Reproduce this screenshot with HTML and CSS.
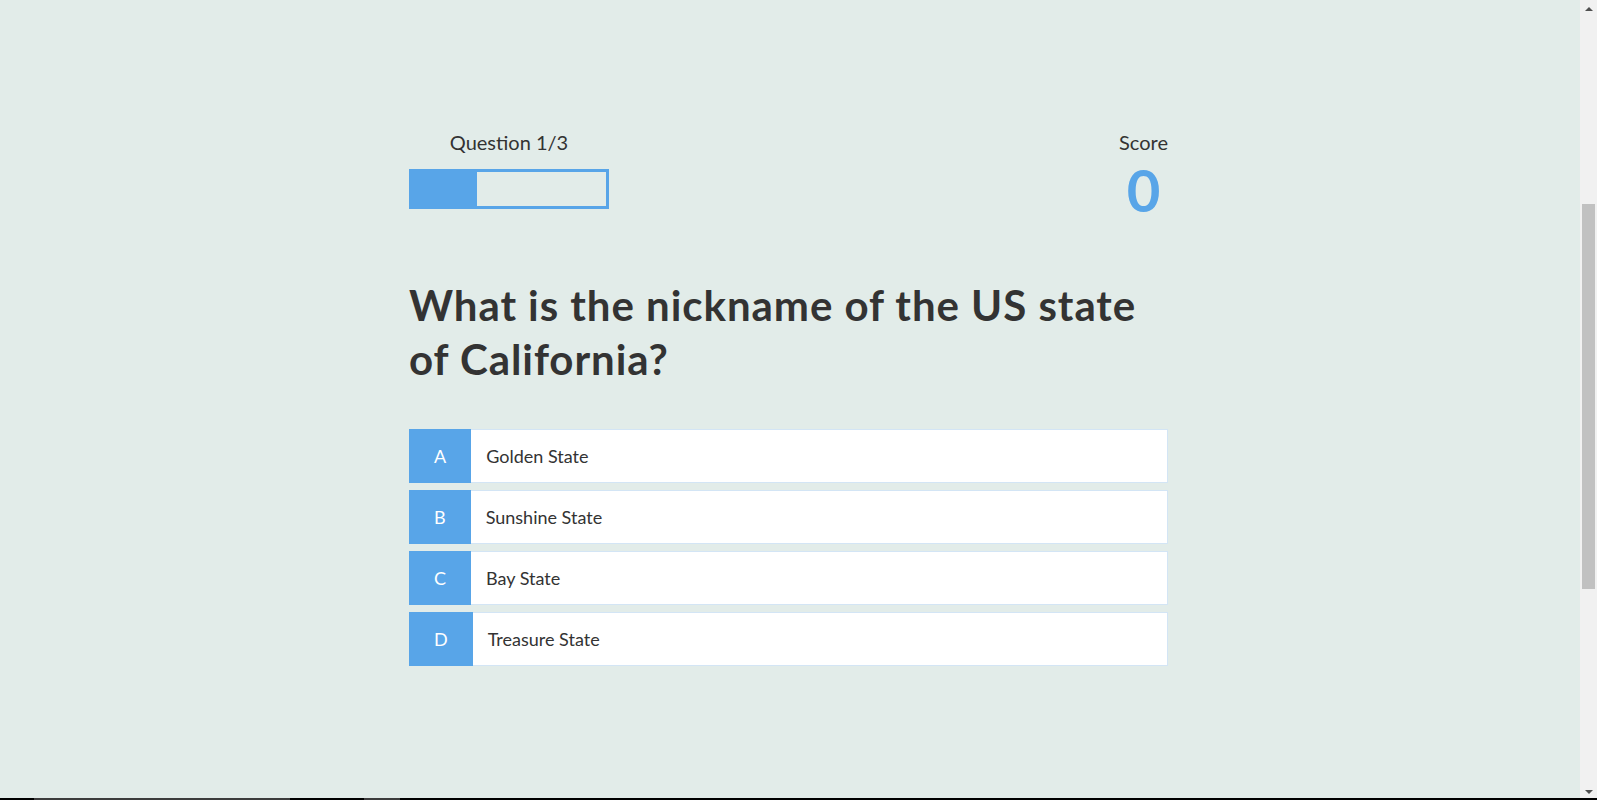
FILE: index.html
```html
<!DOCTYPE html>
<html lang="en">
<head>
<meta charset="utf-8">
<title>Quiz</title>
<link rel="stylesheet" href="styles.css">
</head>
<body>
<div class="screen">
  <div class="page">
    <main class="quiz">
      <header class="hud">
        <div class="progress-block">
          <p class="hud-label">Question 1/3</p>
          <div class="progress-bar"><div class="progress-fill" style="width:33.333%"></div></div>
        </div>
        <div class="score-block">
          <p class="hud-label">Score</p>
          <p class="score-value">0</p>
        </div>
      </header>
      <h1 class="question">What is the nickname of the US state of California?</h1>
      <ul class="choices">
        <li class="choice"><span class="choice-prefix">A</span><span class="choice-text">Golden State</span></li>
        <li class="choice"><span class="choice-prefix">B</span><span class="choice-text">Sunshine State</span></li>
        <li class="choice"><span class="choice-prefix">C</span><span class="choice-text">Bay State</span></li>
        <li class="choice"><span class="choice-prefix">D</span><span class="choice-text">Treasure State</span></li>
      </ul>
    </main>
  </div>
  <div class="scrollbar" aria-hidden="true">
    <div class="scroll-btn">
      <svg width="8" height="4" viewBox="0 0 8 4"><polygon points="0,4 8,4 4,0" fill="#505050"/></svg>
    </div>
    <div class="scroll-track"><div class="scroll-thumb"></div></div>
    <div class="scroll-btn">
      <svg width="8" height="4" viewBox="0 0 8 4"><polygon points="0,0 8,0 4,4" fill="#505050"/></svg>
    </div>
  </div>
</div>
<div class="taskbar-edge"></div>
</body>
</html>
```
FILE: styles.css
```css
html {
  background: #e2ece9;
}
body {
  margin: 0;
  font-family: "Lato", "Open Sans", sans-serif;
  color: #333333;
}
.screen {
  display: flex;
  height: 800px;
  overflow: hidden;
}
.page {
  flex: 1;
  padding-top: 129px;
  padding-right: 3px;
}
.quiz {
  width: 759px;
  margin: 0 auto;
}
.hud {
  display: flex;
  justify-content: space-between;
  align-items: flex-start;
}
.progress-block {
  width: 200px;
}
.hud-label {
  margin: 0;
  font-size: 20px;
  line-height: 26px;
  text-align: center;
}
.progress-bar {
  box-sizing: border-box;
  width: 200px;
  height: 40px;
  margin-top: 14px;
  border: 3px solid #58a5e8;
}
.progress-fill {
  height: 100%;
  background: #58a5e8;
}
.score-block {
  text-align: center;
}
.score-value {
  margin: 6px 0 0;
  font-size: 58px;
  line-height: 58px;
  font-weight: 700;
  color: #58a5e8;
}
.question {
  margin: 59px 0 0;
  font-size: 42px;
  line-height: 54px;
  font-weight: 700;
  letter-spacing: 0.95px;
  color: #333333;
}
.choices {
  list-style: none;
  margin: 43px 0 0;
  padding: 0;
  display: flex;
  flex-direction: column;
  gap: 7px;
}
.choice {
  display: flex;
  height: 54px;
  font-size: 18px;
}
.choice-prefix {
  display: flex;
  align-items: center;
  padding: 0 25px;
  background: #58a5e8;
  color: #ffffff;
}
.choice-text {
  flex: 1;
  display: flex;
  align-items: center;
  padding-left: 15px;
  background: #ffffff;
  border: 1px solid #d3e5f5;
  border-left: none;
}
.scrollbar {
  width: 17px;
  display: flex;
  flex-direction: column;
  background: #f1f1f1;
}
.scroll-btn {
  height: 17px;
  display: flex;
  align-items: center;
  justify-content: center;
}
.scroll-track {
  flex: 1;
  padding: 187px 2px 0;
}
.scroll-thumb {
  height: 385px;
  background: #c1c1c1;
}
.taskbar-edge {
  position: fixed;
  left: 0;
  right: 0;
  bottom: 0;
  height: 2px;
  background:
    linear-gradient(to right, transparent 34px, #3c3c3c 34px, #3c3c3c 290px, transparent 290px, transparent 364px, #3c3c3c 364px, #3c3c3c 400px, transparent 400px),
    #000000;
}
```
